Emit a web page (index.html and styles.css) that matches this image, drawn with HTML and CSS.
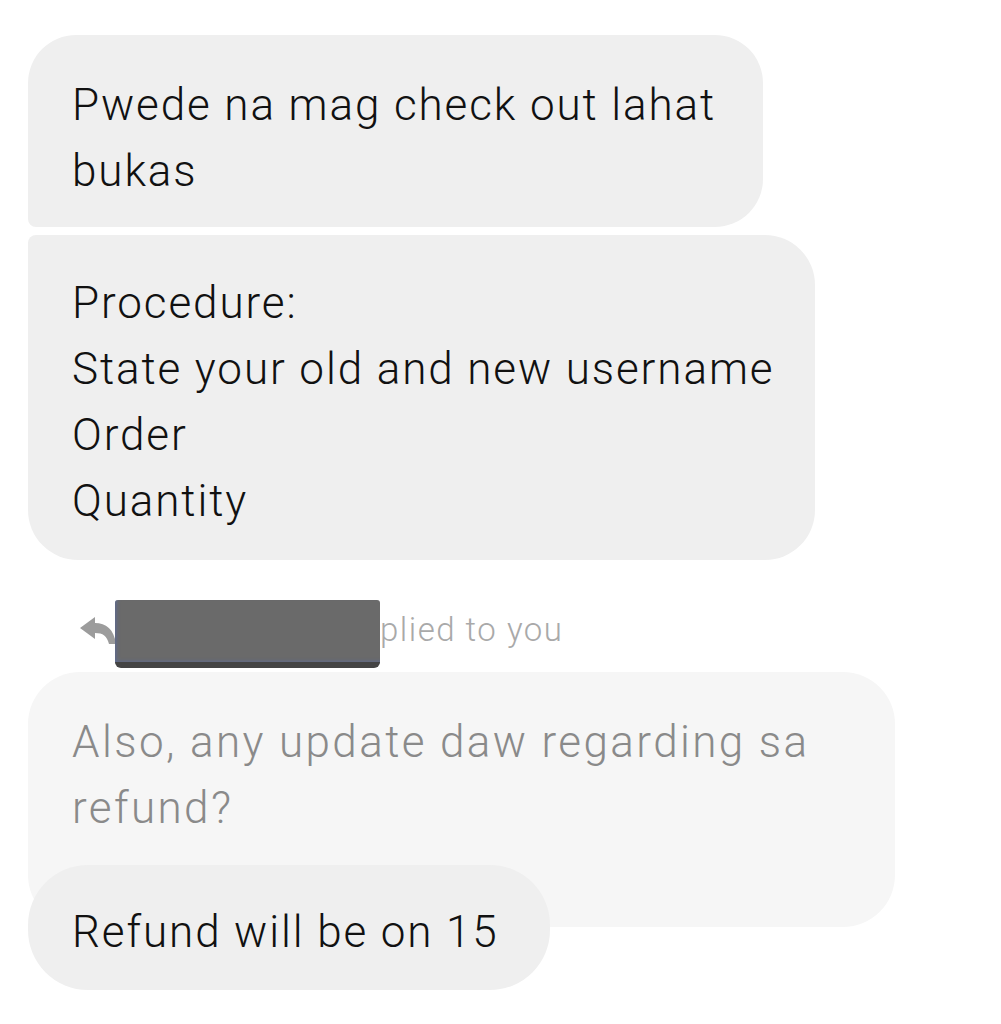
FILE: index.html
```html
<!DOCTYPE html>
<html>

<head>
    <title>Chat</title>
    <link rel="stylesheet" href="styles.css">
</head>

<body>

    <div class="thread">
        <div class="bubble bubble-first bubble-w1">Pwede na mag check out lahat<br>bukas</div>
        <div class="bubble bubble-next bubble-w2">Procedure:<br>State your old and new username<br>Order<br>Quantity</div>

        <div class="reply-row">
            <svg class="reply-icon" width="40" height="32" viewBox="0 0 40 32">
                <path d="M2 15 L17 4 L17 10 C28 10 36 16 38 31 L31 31 C29 23 25 20 17 20 L17 26 Z" fill="#9c9c9c"/>
            </svg>
            <div class="redacted"></div>
            <span class="reply-text">plied to you</span>
        </div>

        <div class="bubble bubble-quote bubble-w3">Also, any update daw regarding sa<br>refund?</div>
        <div class="bubble bubble-reply bubble-w4">Refund will be on 15</div>
    </div>

</body>

</html>
```

FILE: styles.css
```css
body {
    margin: 0;
    background: #fff;
    font-family: Roboto, "Liberation Sans", sans-serif;
    font-weight: 300;
}

.thread {
    display: flex;
    flex-direction: column;
    align-items: flex-start;
    padding: 35px 0 0 28px;
}

.bubble {
    box-sizing: border-box;
    background: #efefef;
    color: #111;
    font-size: 44px;
    line-height: 66px;
    letter-spacing: 1.9px;
    padding: 37px 20px 23px 44px;
    border-radius: 48px;
    white-space: nowrap;
}

.bubble-first {
    border-bottom-left-radius: 8px;
}

.bubble-next {
    margin-top: 8px;
    padding-top: 35px;
    padding-bottom: 26px;
    border-radius: 8px 50px 50px 50px;
}

.bubble-w1 { width: 735px; }
.bubble-w2 { width: 787px; }
.bubble-w3 { width: 867px; }
.bubble-w4 { width: 522px; }

.reply-row {
    display: flex;
    align-items: center;
    height: 68px;
    margin-top: 40px;
    padding-left: 50px;
}

.reply-icon {
    margin-top: -10px;
    margin-right: -3px;
}

.redacted {
    width: 265px;
    height: 68px;
    box-sizing: border-box;
    background: #6a6a6a;
    border-bottom: 6px solid #444;
    border-radius: 3px 3px 6px 6px;
    box-shadow: inset 3px -2px 4px -2px #5a6a99;
}

.reply-text {
    font-size: 33px;
    letter-spacing: 1.5px;
    color: #a9a9a9;
    padding-bottom: 10px;
}

.bubble-quote {
    margin-top: 4px;
    background: #f6f6f6;
    color: #8a8a8a;
    letter-spacing: 2.4px;
    padding-bottom: 86px;
    border-radius: 52px;
}

.bubble-reply {
    margin-top: -62px;
    padding-top: 34px;
    padding-bottom: 25px;
    border-radius: 60px;
}
```
